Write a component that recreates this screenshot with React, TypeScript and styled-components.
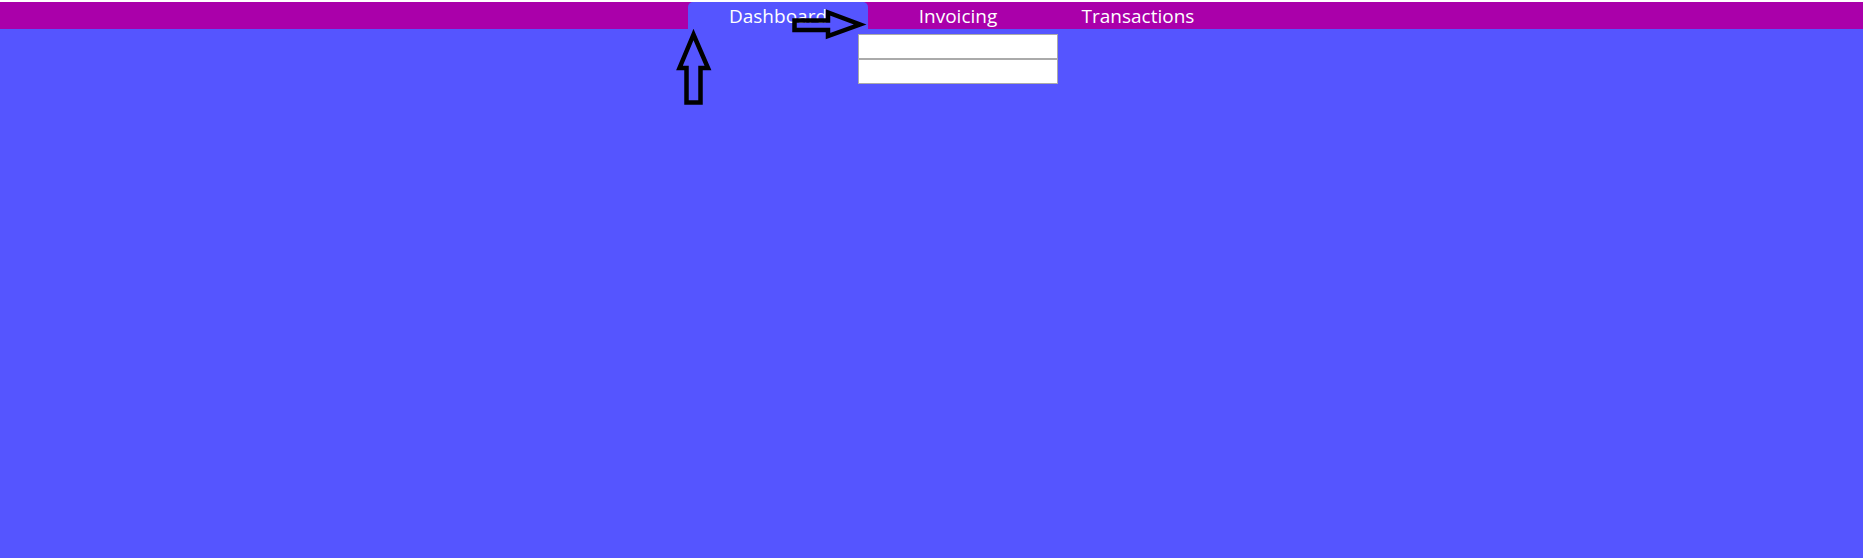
import React from 'react';
import styled, { createGlobalStyle } from 'styled-components';

const GlobalStyle = createGlobalStyle`
	html, body {
		margin: 0;
		padding: 0;
	}
	body {
		background: #5555ff;
		font-family: 'Open Sans', 'Liberation Sans', sans-serif;
		min-height: 558px;
	}
`;

const Page = styled.div`
	position: relative;
	min-height: 558px;
	background: #5555ff;
	border-top: 2px solid #ffffff;
`;

const NavBar = styled.nav`
	display: flex;
	justify-content: center;
	height: 27px;
	padding-left: 53px;
	background: #aa00aa;
`;

const Tab = styled.div<{ $active?: boolean }>`
	position: relative;
	width: 180px;
	height: 27px;
	line-height: 29px;
	text-align: center;
	font-size: 19px;
	color: #ffffff;
	background: ${({ $active }) => ($active ? '#5555ff' : 'transparent')};
	border-radius: ${({ $active }) => ($active ? '5px 5px 0 0' : '0')};
	cursor: pointer;
`;

const Dropdown = styled.div`
	position: absolute;
	top: 32px;
	left: 50%;
	transform: translateX(-50%);
	width: 200px;
	display: flex;
	flex-direction: column;
	z-index: 2;
`;

const DropdownItem = styled.div`
	height: 23px;
	background: #ffffff;
	border: 1px solid #aaaaaa;
`;

const Arrow = styled.svg<{ $left: number; $top: number }>`
	position: absolute;
	left: ${({ $left }) => $left}px;
	top: ${({ $top }) => $top}px;
	pointer-events: none;
	z-index: 3;
`;

const App = () => {
	return (
		<>
			<GlobalStyle />
			<Page>
				<NavBar>
					<Tab $active>Dashboard</Tab>
					<Tab>
						Invoicing
						<Dropdown>
							<DropdownItem />
							<DropdownItem />
						</Dropdown>
					</Tab>
					<Tab>Transactions</Tab>
				</NavBar>

				{/* annotation arrows */}
				<Arrow $left={672} $top={26} width={44} height={82} viewBox='0 0 44 82'>
					<polygon
						points='21.5,6.5 7.5,40 14.5,40 14.5,74.5 28.5,74.5 28.5,40 36,40'
						fill='none'
						stroke='#000'
						strokeWidth={4.5}
						strokeLinejoin='miter'
					/>
				</Arrow>
				<Arrow $left={788} $top={2} width={80} height={36} viewBox='0 0 80 36'>
					<polygon
						points='6.5,16.5 40,16.5 40,8.5 72,20.5 40,32 40,26 6.5,26'
						fill='none'
						stroke='#000'
						strokeWidth={4.5}
						strokeLinejoin='miter'
					/>
				</Arrow>
			</Page>
		</>
	);
};

export default App;
